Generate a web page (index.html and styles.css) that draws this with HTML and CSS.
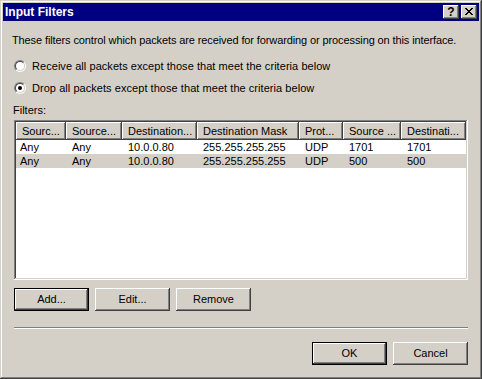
FILE: index.html
```html
<!DOCTYPE html>
<html>
<head>
<meta charset="utf-8">
<title>Input Filters</title>
<link rel="stylesheet" href="styles.css">
</head>
<body>
<div class="window">
  <div class="titlebar">
    <span class="title">Input Filters</span>
    <div class="cap-buttons">
      <div class="cap-btn help">?</div>
      <div class="cap-btn close">
        <svg width="16" height="14" viewBox="0 0 16 14">
          <g fill="#000">
            <rect x="4" y="3" width="2" height="1"/><rect x="10" y="3" width="2" height="1"/>
            <rect x="5" y="4" width="2" height="1"/><rect x="9" y="4" width="2" height="1"/>
            <rect x="6" y="5" width="4" height="1"/>
            <rect x="7" y="6" width="2" height="1"/>
            <rect x="6" y="7" width="4" height="1"/>
            <rect x="5" y="8" width="2" height="1"/><rect x="9" y="8" width="2" height="1"/>
            <rect x="4" y="9" width="2" height="1"/><rect x="10" y="9" width="2" height="1"/>
          </g>
        </svg>
      </div>
    </div>
  </div>
  <div class="content">
    <p class="desc">These filters control which packets are received for forwarding or processing on this interface.</p>
    <div class="radios">
      <div class="radio"><span class="radio-circle"><span class="radio-inner"></span></span><span class="radio-text">Receive all packets except those that meet the criteria below</span></div>
      <div class="radio"><span class="radio-circle"><span class="radio-inner"><span class="dot"></span></span></span><span class="radio-text">Drop all packets except those that meet the criteria below</span></div>
    </div>
    <div class="filters-label">Filters:</div>
    <div class="listbox">
      <div class="lv-grid lv-header">
        <div class="hd">Sourc...</div>
        <div class="hd">Source...</div>
        <div class="hd">Destination...</div>
        <div class="hd">Destination Mask</div>
        <div class="hd">Prot...</div>
        <div class="hd">Source ...</div>
        <div class="hd">Destinati...</div>
      </div>
      <div class="lv-grid lv-row">
        <div class="cell first">Any</div>
        <div class="cell">Any</div>
        <div class="cell">10.0.0.80</div>
        <div class="cell">255.255.255.255</div>
        <div class="cell">UDP</div>
        <div class="cell">1701</div>
        <div class="cell">1701</div>
      </div>
      <div class="lv-grid lv-row selected">
        <div class="cell first">Any</div>
        <div class="cell">Any</div>
        <div class="cell">10.0.0.80</div>
        <div class="cell">255.255.255.255</div>
        <div class="cell">UDP</div>
        <div class="cell">500</div>
        <div class="cell">500</div>
      </div>
    </div>
    <div class="btn-row">
      <div class="btn default">Add...</div>
      <div class="btn">Edit...</div>
      <div class="btn">Remove</div>
    </div>
    <div class="separator"></div>
    <div class="btn-row right">
      <div class="btn default">OK</div>
      <div class="btn">Cancel</div>
    </div>
  </div>
</div>
</body>
</html>
```

FILE: styles.css
```css
html, body {
  margin: 0;
  padding: 0;
  background: #d4d0c8;
}
body {
  font-family: "Liberation Sans", Arial, sans-serif;
  font-size: 11px;
  color: #000;
}
.window {
  width: 482px;
  height: 379px;
  box-sizing: border-box;
  padding: 3px;
  background: #d4d0c8;
  box-shadow: inset -1px -1px #404040, inset 1px 1px #d4d0c8,
              inset -2px -2px #808080, inset 2px 2px #ffffff;
  display: flex;
  flex-direction: column;
}
.titlebar {
  height: 18px;
  background: #000080;
  color: #fff;
  display: flex;
  align-items: center;
  padding-left: 2px;
  padding-right: 2px;
}
.title {
  font-weight: bold;
  font-size: 12px;
  flex: 1;
  line-height: 18px;
}
.cap-buttons {
  display: flex;
  gap: 2px;
}
.cap-btn {
  width: 16px;
  height: 14px;
  background: #d4d0c8;
  box-shadow: inset -1px -1px #404040, inset 1px 1px #ffffff,
              inset -2px -2px #808080;
  color: #000;
  display: flex;
  align-items: center;
  justify-content: center;
}
.cap-btn svg { display: block; }
.help {
  font-weight: bold;
  font-size: 12px;
  line-height: 14px;
}
.content {
  flex: 1;
  padding: 13px 11px 0 11px;
  display: flex;
  flex-direction: column;
}
.desc {
  margin: 0 0 0 -2px;
  line-height: 13px;
  white-space: nowrap;
  letter-spacing: -0.11px;
}
.radios {
  margin-top: 13px;
  display: flex;
  flex-direction: column;
  gap: 9px;
}
.radio {
  height: 13px;
  line-height: 13px;
  display: flex;
  align-items: flex-start;
  gap: 6px;
  white-space: nowrap;
}
.radio-text {
  letter-spacing: 0.05px;
}
.radio-circle {
  width: 12px;
  height: 12px;
  box-sizing: border-box;
  border-radius: 50%;
  border: 1px solid;
  border-color: #808080 #ffffff #ffffff #808080;
  display: flex;
}
.radio-inner {
  flex: 1;
  border-radius: 50%;
  border: 1px solid;
  border-color: #404040 #d4d0c8 #d4d0c8 #404040;
  background: #fff;
  display: flex;
  align-items: center;
  justify-content: center;
}
.dot {
  width: 4px;
  height: 4px;
  border-radius: 50%;
  background: #000;
}
.filters-label {
  margin-top: 9px;
  margin-left: -1px;
  line-height: 13px;
}
.listbox {
  margin-top: 3px;
  height: 160px;
  box-sizing: border-box;
  padding: 2px;
  background: #fff;
  box-shadow: inset -1px -1px #ffffff, inset 1px 1px #808080,
              inset -2px -2px #d4d0c8, inset 2px 2px #404040;
}
.lv-grid {
  display: grid;
  grid-template-columns: 50px 56px 75px 102px 44px 58px 1fr;
}
.hd {
  height: 18px;
  line-height: 18px;
  padding-left: 6px;
  background: #d4d0c8;
  box-shadow: inset -1px -1px #404040, inset 1px 1px #ffffff,
              inset -2px -2px #808080;
  white-space: nowrap;
  overflow: hidden;
}
.lv-row {
  height: 14px;
  line-height: 14px;
}
.lv-row.selected {
  background: #d4d0c8;
}
.cell {
  padding-left: 6px;
  white-space: nowrap;
  overflow: hidden;
}
.cell.first {
  padding-left: 4px;
}
.btn-row {
  margin-top: 8px;
  display: flex;
  gap: 6px;
}
.btn-row.right {
  margin-top: 13px;
  justify-content: flex-end;
}
.btn {
  width: 75px;
  height: 23px;
  box-sizing: border-box;
  background: #d4d0c8;
  box-shadow: inset -1px -1px #404040, inset 1px 1px #ffffff,
              inset -2px -2px #808080;
  display: flex;
  align-items: center;
  justify-content: center;
  line-height: 13px;
}
.btn.default {
  border: 1px solid #000;
}
.separator {
  margin-top: 16px;
  height: 1px;
  background: #808080;
  border-bottom: 1px solid #ffffff;
}
```
